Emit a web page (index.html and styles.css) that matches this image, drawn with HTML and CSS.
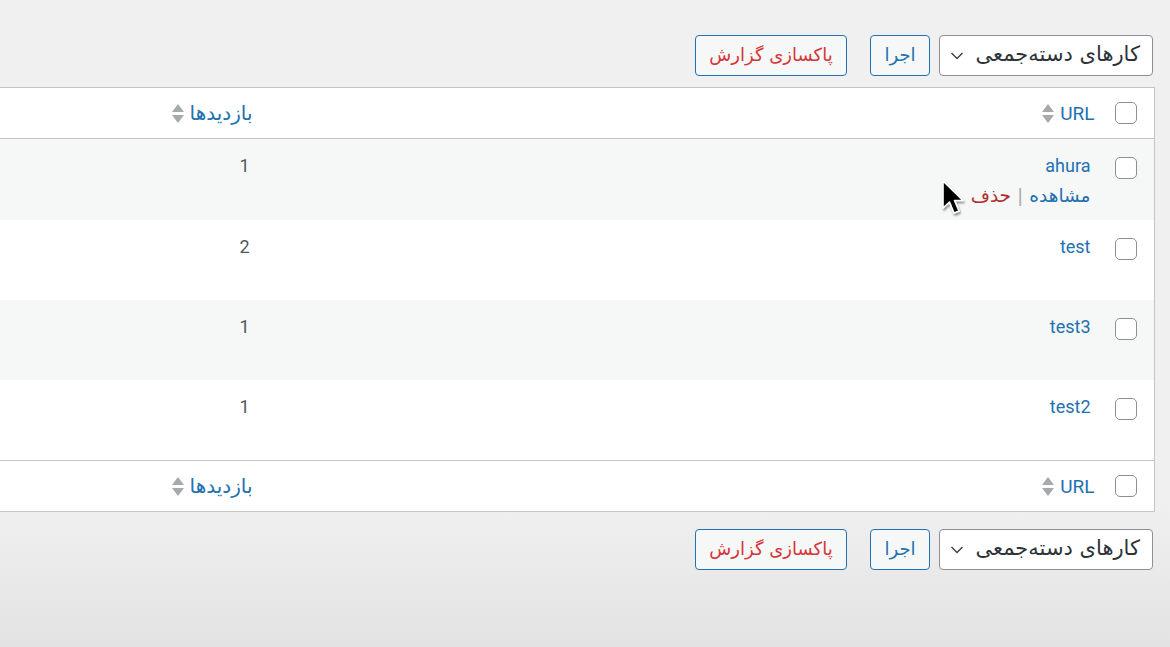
FILE: index.html
```html
<!DOCTYPE html>
<html lang="fa">
<head>
<meta charset="utf-8">
<title>گزارش</title>
<link rel="stylesheet" href="styles.css">
</head>
<body>
<div class="page" dir="rtl">
  <div class="tablenav tablenav-top">
    <div class="bulk-select">
      <span class="bulk-label">کارهای دسته‌جمعی</span>
      <svg class="chev" width="14" height="14" viewBox="0 0 14 14"><path d="M1.5 4 L7 9.5 L12.5 4" fill="none" stroke="#3c434a" stroke-width="1.5"/></svg>
    </div>
    <button class="btn btn-apply">اجرا</button>
    <button class="btn btn-clear">پاکسازی گزارش</button>
  </div>

  <table class="list-table">
    <colgroup>
      <col class="col-cb">
      <col class="col-url">
      <col class="col-visits">
    </colgroup>
    <thead>
      <tr>
        <th class="cell-cb"><span class="cb"></span></th>
        <th class="cell-url"><a class="sort-link">URL<span class="sort-ind"><i class="up"></i><i class="down"></i></span></a></th>
        <th class="cell-visits"><a class="sort-link">بازدیدها<span class="sort-ind"><i class="up"></i><i class="down"></i></span></a></th>
      </tr>
    </thead>
    <tbody>
      <tr class="alt row-tall">
        <td class="cell-cb"><span class="cb"></span></td>
        <td class="cell-url">
          <a class="row-title">ahura</a>
          <div class="row-actions"><a class="act-view">مشاهده</a><span class="sep">|</span><a class="act-del">حذف</a></div>
        </td>
        <td class="cell-visits">1</td>
      </tr>
      <tr>
        <td class="cell-cb"><span class="cb"></span></td>
        <td class="cell-url"><a class="row-title">test</a></td>
        <td class="cell-visits">2</td>
      </tr>
      <tr class="alt">
        <td class="cell-cb"><span class="cb"></span></td>
        <td class="cell-url"><a class="row-title">test3</a></td>
        <td class="cell-visits">1</td>
      </tr>
      <tr class="row-tall">
        <td class="cell-cb"><span class="cb"></span></td>
        <td class="cell-url"><a class="row-title">test2</a></td>
        <td class="cell-visits">1</td>
      </tr>
    </tbody>
    <tfoot>
      <tr>
        <th class="cell-cb"><span class="cb"></span></th>
        <th class="cell-url"><a class="sort-link">URL<span class="sort-ind"><i class="up"></i><i class="down"></i></span></a></th>
        <th class="cell-visits"><a class="sort-link">بازدیدها<span class="sort-ind"><i class="up"></i><i class="down"></i></span></a></th>
      </tr>
    </tfoot>
  </table>

  <div class="tablenav tablenav-bottom">
    <div class="bulk-select">
      <span class="bulk-label">کارهای دسته‌جمعی</span>
      <svg class="chev" width="14" height="14" viewBox="0 0 14 14"><path d="M1.5 4 L7 9.5 L12.5 4" fill="none" stroke="#3c434a" stroke-width="1.5"/></svg>
    </div>
    <button class="btn btn-apply">اجرا</button>
    <button class="btn btn-clear">پاکسازی گزارش</button>
  </div>
</div>

<svg class="cursor" width="26" height="42" viewBox="0 0 26 42">
  <defs>
    <filter id="sh" x="-30%" y="-30%" width="160%" height="160%">
      <feGaussianBlur in="SourceAlpha" stdDeviation="1.2"/>
      <feOffset dx="0.5" dy="1.5"/>
      <feComponentTransfer><feFuncA type="linear" slope="0.45"/></feComponentTransfer>
      <feMerge><feMergeNode/><feMergeNode in="SourceGraphic"/></feMerge>
    </filter>
  </defs>
  <path filter="url(#sh)" d="M2 2 L2 29 L8.5 23 L13 34 L18 32 L13.5 21.5 L22 21.5 Z" fill="#000" stroke="#fff" stroke-width="1.6" stroke-linejoin="round"/>
</svg>
</body>
</html>
```

FILE: styles.css
```css
html, body {
  margin: 0;
  padding: 0;
}

body {
  width: 1170px;
  height: 647px;
  overflow: hidden;
  background: linear-gradient(to bottom, #f0f0f1 0px, #f0f0f1 500px, #e3e3e3 647px);
  font-family: Roboto, "DejaVu Sans", sans-serif;
  color: #3c434a;
  position: relative;
}

.page {
  padding-top: 35px;
  padding-right: 15px;
  margin-left: -12px;
}

/* toolbars */
.tablenav {
  display: flex;
  align-items: center;
  height: 41px;
  margin-right: 2px;
}

.tablenav-top {
  margin-bottom: 11px;
}

.tablenav-bottom {
  margin-top: 17px;
}

.bulk-select {
  box-sizing: border-box;
  width: 214px;
  height: 41px;
  border: 1px solid #8c8f94;
  border-radius: 4px;
  background: #fff;
  display: flex;
  align-items: center;
  justify-content: space-between;
  padding: 0 12px 0 10px;
}

.bulk-label {
  font-size: 21px;
  color: #2c3338;
  font-family: "DejaVu Sans", sans-serif;
  padding-bottom: 3px;
}

.chev {
  display: block;
}

.btn {
  box-sizing: border-box;
  height: 41px;
  border: 1px solid #2271b1;
  border-radius: 4px;
  background: #f6f7f7;
  font-family: "DejaVu Sans", sans-serif;
  font-size: 18px;
  padding: 0 10px 3px;
  cursor: pointer;
}

.btn-apply {
  width: 60px;
  margin-right: 9px;
  color: #2271b1;
}

.btn-clear {
  width: 152px;
  margin-right: 23px;
  color: #d63638;
}

/* table */
.list-table {
  width: 100%;
  table-layout: fixed;
  border-collapse: collapse;
  background: #fff;
  border: 1px solid #c3c4c7;
}

.col-cb { width: 50px; }
.col-visits { width: 274px; }

.list-table th {
  font-weight: normal;
  text-align: right;
  height: 50px;
  padding: 0;
  vertical-align: middle;
}

.list-table thead th {
  border-bottom: 1px solid #c3c4c7;
}

.list-table tfoot th {
  border-top: 1px solid #c3c4c7;
}

.list-table tbody tr {
  height: 80px;
}

.list-table tbody tr.row-tall {
  height: 81px;
}

.list-table tbody tr.alt {
  background: #f6f7f7;
}

.list-table td {
  vertical-align: top;
  padding: 12px 0 0;
  font-size: 18px;
  line-height: 30px;
}

.cell-cb {
  text-align: right;
}

.cb {
  display: inline-block;
  box-sizing: border-box;
  width: 22px;
  height: 22px;
  border: 1px solid #8c8f94;
  border-radius: 5px;
  background: #fff;
  margin-right: 17px;
  vertical-align: middle;
}

td.cell-cb .cb {
  margin-top: 6px;
  vertical-align: top;
}

th.cell-url {
  padding-right: 10px;
}

td.cell-url {
  padding-right: 14px;
}

th.cell-visits {
  padding-right: 10px;
}

td.cell-visits {
  padding-right: 13px;
  color: #50575e;
}

.sort-link {
  display: inline-flex;
  align-items: center;
  gap: 6px;
  color: #2271b1;
  font-size: 19px;
  font-family: Roboto, "DejaVu Sans", sans-serif;
}

.cell-visits .sort-link {
  font-family: "DejaVu Sans", sans-serif;
  font-size: 20px;
  gap: 6px;
}

.sort-ind {
  display: inline-flex;
  flex-direction: column;
  gap: 3px;
  width: 12px;
  align-items: center;
}

.sort-ind i {
  display: block;
  width: 0;
  height: 0;
  border-left: 6px solid transparent;
  border-right: 6px solid transparent;
}

.sort-ind .up {
  border-bottom: 8px solid #a7aaad;
}

.sort-ind .down {
  border-top: 8px solid #a7aaad;
}

.row-title {
  color: #2271b1;
  font-size: 18px;
}

.row-actions {
  font-family: "DejaVu Sans", sans-serif;
  font-size: 18.5px;
  line-height: 30px;
}

.act-view {
  color: #2271b1;
}

.act-del {
  color: #b32d2e;
}

.sep {
  color: #a7aaad;
  margin: 0 6px;
}

/* mouse pointer overlay */
.cursor {
  position: absolute;
  left: 941px;
  top: 179px;
}
```
